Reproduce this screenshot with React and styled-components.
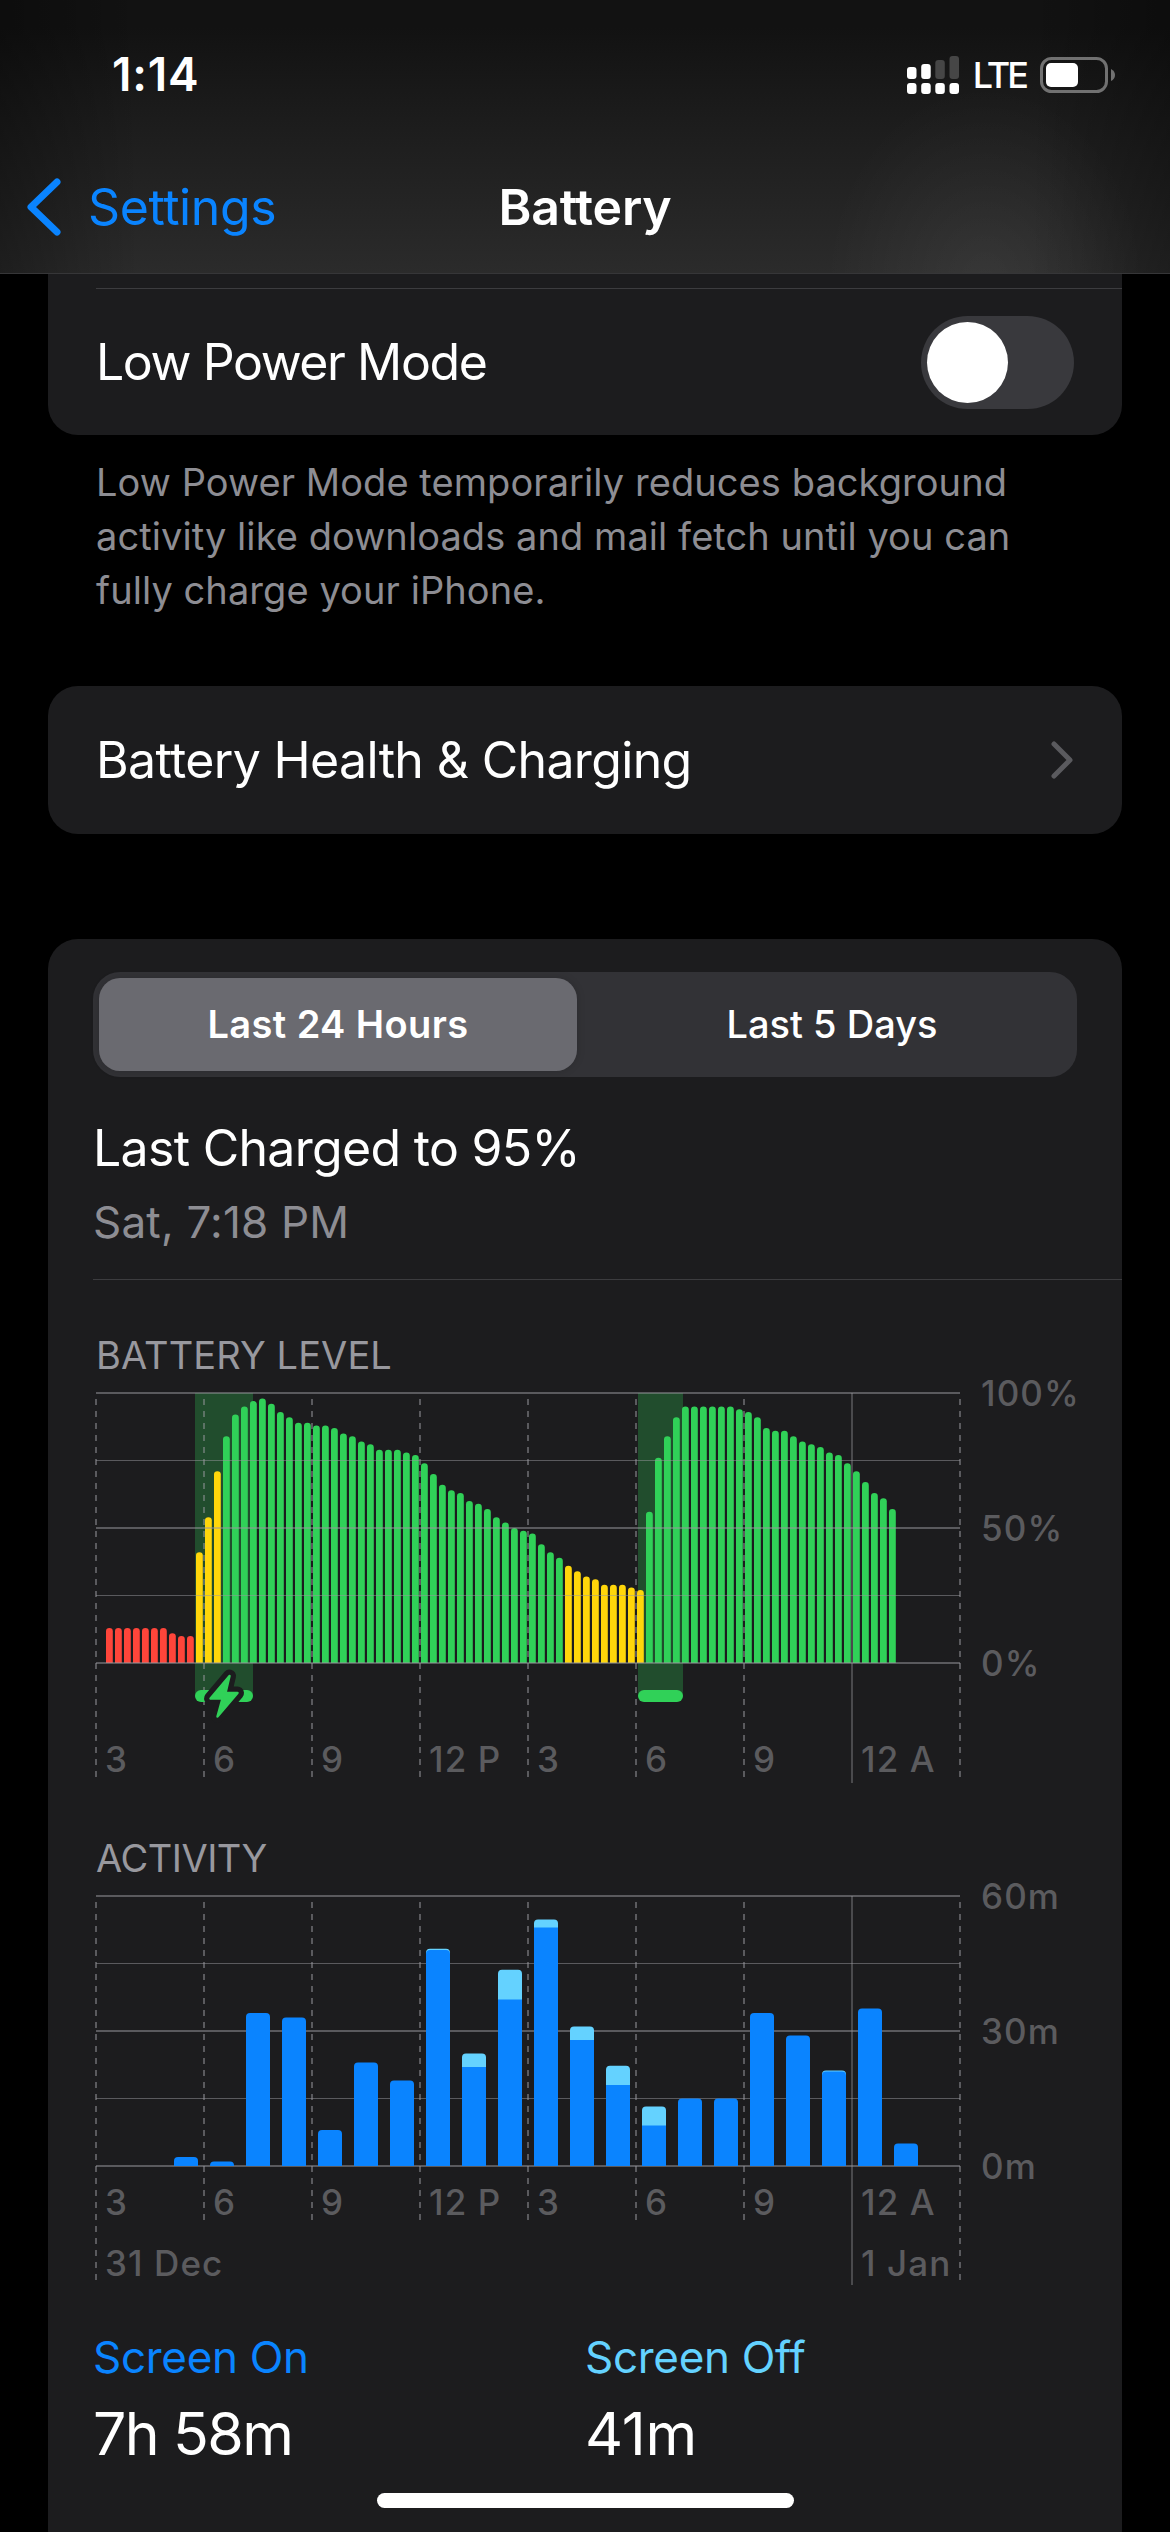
import styled, { createGlobalStyle } from 'styled-components'

const colors = {
    card: '#1c1c1e',
    blue: '#0a84ff',
    cyan: '#64d2ff',
    green: '#30d158',
    yellow: '#ffd60a',
    red: '#ff453a',
    secondary: '#8d8d93',
    axis: '#5b5b5e',
}

const GlobalStyle = createGlobalStyle`
    body {
        margin: 0;
        background: #000;
        font-family: Inter, 'Liberation Sans', sans-serif;
        color: #fff;
    }
`

const Screen = styled.div`
    position: relative;
    width: 1170px;
    height: 2532px;
    overflow: hidden;
    background: #000;
`

const Header = styled.header`
    box-sizing: border-box;
    height: 274px;
    border-bottom: 1px solid #363638;
    background:
        radial-gradient(ellipse 160px 200px at 985px 285px, rgba(255, 255, 255, 0.06), transparent),
        linear-gradient(90deg, rgba(0, 0, 0, 0.3), transparent 140px, transparent 1030px, rgba(0, 0, 0, 0.3)),
        linear-gradient(#121212 10%, #1b1b1b 40%, #2b2b2b);
`

const StatusBar = styled.div`
    display: flex;
    justify-content: space-between;
    height: 149px;
    padding: 0 54px 0 112px;
`

const Time = styled.div`
    font-size: 46px;
    line-height: 149px;
    font-weight: 600;
    letter-spacing: 0.8px;
`

const StatusIcons = styled.div`
    display: flex;
    align-items: center;
    gap: 14px;
    height: 149px;
`

const Network = styled.span`
    font-size: 36px;
    font-weight: 500;
    line-height: 152px;
    letter-spacing: -3px;
`

const NavBar = styled.nav`
    display: grid;
    grid-template-columns: 1fr auto 1fr;
    align-items: center;
    height: 116px;
    padding: 0 27px;
    font-size: 50px;
    line-height: 116px;
`

const Back = styled.a`
    display: flex;
    align-items: center;
    gap: 26px;
    color: ${colors.blue};
    letter-spacing: -0.4px;
`

const Title = styled.span`
    font-weight: 600;
    letter-spacing: -0.2px;
`

const Card = styled.section`
    margin: ${props => props.$top || 0}px 48px 0;
    background: ${colors.card};
    border-radius: ${props => (props.$open ? '0 0 30px 30px' : '30px')};
    overflow: hidden;
`

const Divider = styled.hr`
    height: 1px;
    margin: ${props => props.$top}px 0 0 ${props => props.$left}px;
    border: 0;
    background: #3c3c3f;
`

const Row = styled.div`
    display: flex;
    align-items: center;
    justify-content: space-between;
    height: ${props => props.$height}px;
    padding: 0 48px;
    font-size: 50px;
    letter-spacing: ${props => props.$spacing}px;
`

const Switch = styled.div`
    box-sizing: border-box;
    width: 153px;
    height: 93px;
    padding: 6px;
    border-radius: 47px;
    background: #39393d;
`

const Knob = styled.div`
    width: 81px;
    height: 81px;
    border-radius: 50%;
    background: #fff;
`

const Note = styled.p`
    width: 960px;
    margin: 20px 0 0 96px;
    color: ${colors.secondary};
    font-size: 38px;
    line-height: 54px;
    letter-spacing: 0.07px;
`

const Segmented = styled.div`
    display: grid;
    grid-template-columns: 1fr 1fr;
    gap: 16px;
    box-sizing: border-box;
    height: 105px;
    margin: 33px 45px 0;
    padding: 6px;
    border-radius: 27px;
    background: #323236;
`

const Segment = styled.div`
    border-radius: 21px;
    background: ${props => (props.$active ? '#6a6a70' : 'transparent')};
    box-shadow: ${props => (props.$active ? '0 0 8px rgba(0, 0, 0, 0.15)' : 'none')};
    font-size: 38px;
    font-weight: ${props => (props.$active ? 600 : 500)};
    line-height: 93px;
    letter-spacing: ${props => (props.$active ? 0.4 : 0)}px;
    text-align: center;
`

const Charged = styled.div`
    margin: 41px 0 0 45px;
    font-size: 50px;
    line-height: 60px;
    letter-spacing: -0.7px;
`

const ChargedAt = styled.div`
    margin: 14px 0 0 45px;
    color: ${colors.secondary};
    font-size: 44px;
    line-height: 60px;
    letter-spacing: 0.2px;
`

const ChartTitle = styled.h2`
    margin: ${props => props.$top}px 0 0 48px;
    color: #98989e;
    font-size: 38px;
    font-weight: 400;
    line-height: 46px;
    letter-spacing: ${props => props.$spacing}px;
`

const ChartSvg = styled.svg`
    display: block;
    overflow: visible;
    font-size: 35px;
    font-weight: 500;
    letter-spacing: 1.1px;
`

const Totals = styled.div`
    display: grid;
    grid-template-columns: 492px 1fr;
    margin: 39px 0 0 45px;
`

const TotalLabel = styled.div`
    color: ${props => props.$color};
    font-size: 44px;
    line-height: 56px;
    letter-spacing: -0.3px;
`

const TotalValue = styled.div`
    margin-top: 14px;
    padding-bottom: 90px;
    font-size: 59px;
    line-height: 70px;
    letter-spacing: ${props => props.$spacing}px;
`

const HomeIndicator = styled.div`
    position: absolute;
    left: 377px;
    bottom: 24px;
    width: 417px;
    height: 15px;
    border-radius: 8px;
    background: #fff;
`

const levels = [
    13, 13, 13, 13, 13, 13, 13, 11, 10, 10, 41, 54, 71, 84, 92, 95, 97, 98, 96, 93, 91, 89,
    89, 88, 88, 87, 85, 84, 82, 81, 79, 79, 79, 78, 77, 74, 70, 66, 64, 63, 60, 59, 57, 54,
    52, 50, 49, 48, 44, 41, 39, 36, 34, 32, 31, 29, 29, 29, 28, 27, 56, 76, 84, 91, 95, 95,
    95, 95, 95, 95, 94, 93, 91, 87, 86, 86, 84, 82, 81, 80, 78, 77, 74, 71, 67, 63, 61, 57,
]

// [screen on, screen off] in minutes, one pair per hour
const activity = [
    [0, 0], [0, 0], [2, 0], [1, 0], [34, 0], [33, 0], [8, 0], [23, 0], [19, 0], [48, 0.3],
    [22, 3], [37, 6.6], [53, 1.8], [28, 3], [18, 4.3], [9, 4.2], [15, 0], [15, 0], [34, 0],
    [29, 0], [21, 0.2], [35, 0], [5, 0],
]

const hours = ['3', '6', '9', '12 P', '3', '6', '9', '12 A']

const levelColor = (value, i) => {
    if (value <= 20) return colors.red
    if ((i > 9 && i < 13) || (i > 50 && i < 60)) return colors.yellow
    return colors.green
}

function Grid({ top, short, long, solid }) {
    return (
        <g stroke="#98989e">
            {[0, 1, 2, 3, 4].map(i => (
                <line
                    key={i}
                    x1="48"
                    x2="912"
                    y1={top + i * 67.5}
                    y2={top + i * 67.5}
                    strokeWidth={i % 2 ? 1 : 2}
                    strokeOpacity="0.5"
                />
            ))}
            {[0, 1, 2, 3, 4, 5, 6, 7, 8].map(i => (
                <line
                    key={i}
                    x1={48 + i * 108}
                    x2={48 + i * 108}
                    y1={i === 7 ? solid : i % 8 ? short : long}
                    y2={top}
                    strokeWidth={i === 7 ? 1.5 : 2}
                    strokeDasharray={i === 7 ? undefined : '6 6'}
                    strokeOpacity="0.5"
                />
            ))}
        </g>
    )
}

function Labels({ y, top, scale }) {
    return (
        <g fill={colors.axis}>
            {hours.map((hour, i) => (
                <text key={i} x={57 + i * 108} y={y}>{hour}</text>
            ))}
            {scale.map((label, i) => (
                <text key={label} x="933" y={top + 13 + i * 135}>{label}</text>
            ))}
        </g>
    )
}

function BatteryChart() {
    const base = 285
    const bolt = 'M181.500 298L162.500 320.500H174.500L169.500 338.500L189.500 315H177.500Z'
    return (
        <ChartSvg width="1074" height="412">
            <rect x="147" y="15" width="58" height="303" fill={colors.green} fillOpacity="0.27" />
            <rect x="590" y="15" width="45" height="303" fill={colors.green} fillOpacity="0.27" />
            {levels.map((value, i) => {
                const x = 58 + i * 9
                const y = base - value * 2.7
                return (
                    <path
                        key={i}
                        d={`M${x} ${base}V${y + 3.3}a3.4 3.3 0 0 1 6.8 0V${base}z`}
                        fill={levelColor(value, i)}
                    />
                )
            })}
            <Grid top={15} short={399} long={399} solid={405} />
            <rect x="147" y="312" width="58" height="12" rx="6" fill={colors.green} />
            <rect x="590" y="312" width="45" height="12" rx="6" fill={colors.green} />
            <path d={bolt} fill={colors.card} stroke={colors.card} strokeWidth="13" strokeLinejoin="round" />
            <path d={bolt} fill={colors.green} stroke={colors.green} strokeWidth="2.500" strokeLinejoin="round" />
            <Labels y={394} top={15} scale={['100%', '50%', '0%']} />
        </ChartSvg>
    )
}

function ActivityChart() {
    const base = 285
    return (
        <ChartSvg width="1074" height="409">
            <Grid top={15} short={339} long={399} solid={404} />
            {activity.map(([on, off], i) => {
                const x = 54 + i * 36
                const mid = base - on * 4.5
                const y = base - (on + off) * 4.5
                if (!on) return null
                return (
                    <g key={i}>
                        <path
                            d={`M${x} ${base}V${y + 4}q0-4 4-4h16q4 0 4 4V${base}z`}
                            fill={off ? colors.cyan : colors.blue}
                        />
                        {off >= 1 && <rect x={x} y={mid} width="24" height={base - mid} fill={colors.blue} />}
                        {off > 0 && off < 1 && (
                            <path d={`M${x} ${base}V${mid + 4}q0-4 4-4h16q4 0 4 4V${base}z`} fill={colors.blue} />
                        )}
                    </g>
                )
            })}
            <Labels y={334} top={15} scale={['60m', '30m', '0m']} />
            <text x="57" y="395" fill={colors.axis}>31 Dec</text>
            <text x="813" y="395" fill={colors.axis}>1 Jan</text>
        </ChartSvg>
    )
}

function SignalIcon() {
    return (
        <svg width="52" height="38" viewBox="0 0 52 38" fill="#fff">
            <rect x="0" y="11" width="9.500" height="12" rx="3" />
            <rect x="14.200" y="8" width="9.500" height="15" rx="3" />
            <rect x="28.300" y="4" width="9.500" height="19" rx="3" fill="#464646" />
            <rect x="42.500" y="0" width="9.500" height="23" rx="3" fill="#464646" />
            <rect x="0" y="27" width="9.500" height="11" rx="3" />
            <rect x="14.200" y="27" width="9.500" height="11" rx="3" />
            <rect x="28.300" y="27" width="9.500" height="11" rx="3" />
            <rect x="42.500" y="27" width="9.500" height="11" rx="3" />
        </svg>
    )
}

function BatteryIcon() {
    return (
        <svg width="76" height="36" viewBox="0 0 76 36">
            <rect x="1.500" y="1.500" width="65" height="33" rx="10" fill="none" stroke="#717171" strokeWidth="3" />
            <rect x="6" y="6" width="32" height="24" rx="5" fill="#fff" />
            <path d="M71 12q4 2 4 6t-4 6z" fill="#717171" />
        </svg>
    )
}

export default function App() {
    return (
        <Screen>
            <GlobalStyle />
            <Header>
                <StatusBar>
                    <Time>1:14</Time>
                    <StatusIcons>
                        <SignalIcon />
                        <Network>LTE</Network>
                        <BatteryIcon />
                    </StatusIcons>
                </StatusBar>
                <NavBar>
                    <Back>
                        <svg width="35" height="58" viewBox="0 0 35 58">
                            <path d="M30 4L4 29L30 54" fill="none" stroke="currentColor" strokeWidth="7" strokeLinecap="round" strokeLinejoin="round" />
                        </svg>
                        Settings
                    </Back>
                    <Title>Battery</Title>
                </NavBar>
            </Header>
            <Card $open>
                <Divider $top={14} $left={48} />
                <Row $height={146} $spacing={-1.4}>
                    Low Power Mode
                    <Switch>
                        <Knob />
                    </Switch>
                </Row>
            </Card>
            <Note>
                Low Power Mode temporarily reduces background<br />
                activity like downloads and mail fetch until you can<br />
                fully charge your iPhone.
            </Note>
            <Card $top={69}>
                <Row $height={148} $spacing={-0.65}>
                    Battery Health & Charging
                    <svg width="24" height="40" viewBox="0 0 24 40">
                        <path d="M4 4L20 20L4 36" fill="none" stroke="#5a5a5e" strokeWidth="5" strokeLinecap="round" strokeLinejoin="round" />
                    </svg>
                </Row>
            </Card>
            <Card $top={105}>
                <Segmented>
                    <Segment $active>Last 24 Hours</Segment>
                    <Segment>Last 5 Days</Segment>
                </Segmented>
                <Charged>Last Charged to 95%</Charged>
                <ChargedAt>Sat, 7:18 PM</ChargedAt>
                <Divider $top={27} $left={45} />
                <ChartTitle $top={52} $spacing={0.1}>BATTERY LEVEL</ChartTitle>
                <BatteryChart />
                <ChartTitle $top={45} $spacing={-0.5}>ACTIVITY</ChartTitle>
                <ActivityChart />
                <Totals>
                    <div>
                        <TotalLabel $color={colors.blue}>Screen On</TotalLabel>
                        <TotalValue $spacing={-1.6}>7h 58m</TotalValue>
                    </div>
                    <div>
                        <TotalLabel $color={colors.cyan}>Screen Off</TotalLabel>
                        <TotalValue $spacing={-0.2}>41m</TotalValue>
                    </div>
                </Totals>
            </Card>
            <HomeIndicator />
        </Screen>
    )
}
